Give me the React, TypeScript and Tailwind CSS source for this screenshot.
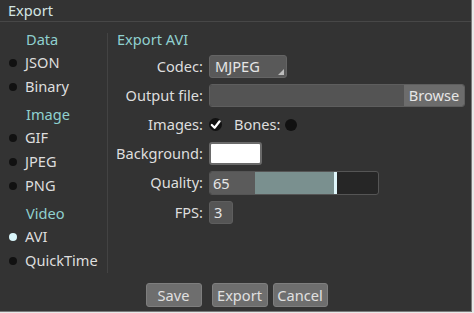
import React from 'react';

const font = { fontFamily: '"Noto Sans", "Open Sans", sans-serif' };

const groups = [
  { title: 'Data', items: ['JSON', 'Binary'] },
  { title: 'Image', items: ['GIF', 'JPEG', 'PNG'] },
  { title: 'Video', items: ['AVI', 'QuickTime'] },
];

function Label({ children }: { children: React.ReactNode }) {
  return <div className="w-[96px] shrink-0 pr-[1px] text-right">{children}</div>;
}

export default function App() {
  return (
    <div className="w-[474px] h-[313px] bg-[#e8e8e8] text-[14.6px] text-[#dedede]" style={font}>
      <div className="w-[472px] h-[312px] bg-[#333333] border-r border-b border-[#7a7a7a] flex flex-col">
        {/* Title */}
        <div className="h-[22px] border-b border-[#474747] pl-[8px] leading-[21px] text-[#d3e6e3]">Export</div>

        <div className="flex h-[251px] pt-[5px]">
          {/* Sidebar */}
          <div className="w-[108px] flex">
            <div className="flex-1 flex flex-col">
              {groups.map((g, gi) => (
                <div key={g.title} className={gi > 0 ? 'mt-[3px]' : ''}>
                  <div className="h-[24px] leading-[24px] pl-[26px] text-[#8fd0cf]">{g.title}</div>
                  {g.items.map((it) => (
                    <div key={it} className="h-[24px] flex items-center">
                      <span
                        className={`ml-[9px] w-[8px] h-[8px] rounded-full ${
                          it === 'AVI' ? 'bg-[#d9f6fb]' : 'bg-[#111111]'
                        }`}
                      />
                      <span className="ml-[8px]">{it}</span>
                    </div>
                  ))}
                </div>
              ))}
            </div>
            <div className="w-px mt-[6px] bg-[#434343]" />
          </div>

          {/* Form */}
          <div className="flex-1 flex flex-col">
            <div className="h-[24px] leading-[24px] pl-[9px] text-[#8fd0cf]">Export AVI</div>

            <div className="mt-[4px] h-[23px] flex items-center">
              <Label>Codec:</Label>
              <div className="ml-[5px] relative w-[78px] h-[23px] rounded-[3px] bg-[#595959] border border-[#646464] pl-[5px] leading-[21px] text-[#e6e6e6]">
                MJPEG
                <span className="absolute right-[2px] bottom-[2px] w-0 h-0 border-l-[6px] border-l-transparent border-b-[6px] border-b-[#bdbdbd]" />
              </div>
            </div>

            <div className="mt-[6px] h-[23px] flex items-center">
              <Label>Output file:</Label>
              <div className="ml-[5px] w-[256px] h-[23px] flex rounded-[3px] overflow-hidden border border-[#5e5e5e]">
                <div className="flex-1 bg-[#545454]" />
                <div className="w-[60px] bg-[#6c6c6c] text-center leading-[21px] text-[#e6e6e6]">Browse</div>
              </div>
            </div>

            <div className="mt-[6px] h-[23px] flex items-center">
              <Label>Images:</Label>
              <div className="ml-[5px] w-[13px] h-[13px] rounded-full bg-[#111111] flex items-center justify-center">
                <svg width="11" height="11" viewBox="0 0 12 12">
                  <path d="M2 6.5 L5 9.5 L10.5 2.5" fill="none" stroke="#ffffff" strokeWidth="2.4" strokeLinecap="round" strokeLinejoin="round" />
                </svg>
              </div>
              <span className="ml-[12px]">Bones:</span>
              <span className="ml-[5px] w-[12px] h-[12px] rounded-full bg-[#111111]" />
            </div>

            <div className="mt-[6px] h-[23px] flex items-center">
              <Label>Background:</Label>
              <div className="ml-[5px] w-[53px] h-[23px] rounded-[3px] border-[2px] border-[#6a6a6a] bg-white" />
            </div>

            <div className="mt-[6px] h-[24px] flex items-center">
              <Label>Quality:</Label>
              <div className="ml-[5px] w-[170px] h-[24px] flex rounded-[3px] overflow-hidden border border-[#555555] bg-[#262626]">
                <div className="w-[45px] bg-[#5b5b5b] pl-[3px] leading-[22px] text-[#e6e6e6]">65</div>
                <div className="w-[79px] bg-[#7a908f]" />
                <div className="w-[3px] bg-[#dff6fb]" />
                <div className="flex-1" />
              </div>
            </div>

            <div className="mt-[6px] h-[23px] flex items-center">
              <Label>FPS:</Label>
              <div className="ml-[5px] w-[24px] h-[23px] rounded-[3px] bg-[#555555] border border-[#5e5e5e] pl-[4px] leading-[21px] text-[#e6e6e6]">3</div>
            </div>
          </div>
        </div>

        {/* Buttons */}
        <div className="mt-[10px] flex justify-center pl-[2px]">
          <button className="w-[56px] h-[24px] rounded-[3px] bg-[#6e6e6e] border border-[#7e7e7e] text-[#e0e0e0] leading-[22px]">Save</button>
          <button className="ml-[10px] w-[56px] h-[24px] rounded-[3px] bg-[#6e6e6e] border border-[#7e7e7e] text-[#e0e0e0] leading-[22px]">Export</button>
          <button className="ml-[5px] w-[55px] h-[24px] rounded-[3px] bg-[#6e6e6e] border border-[#7e7e7e] text-[#e0e0e0] leading-[22px]">Cancel</button>
        </div>
      </div>
    </div>
  );
}
